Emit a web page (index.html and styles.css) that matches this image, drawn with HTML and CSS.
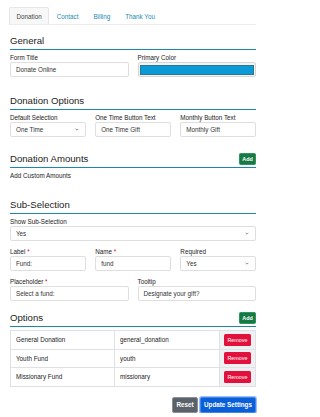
FILE: index.html
```html
<!DOCTYPE html>
<html>
<head>
<meta charset="utf-8">
<link rel="stylesheet" href="styles.css">
</head>
<body>
<div class="page">
  <ul class="tabs">
    <li class="tab active">Donation</li>
    <li class="tab">Contact</li>
    <li class="tab">Billing</li>
    <li class="tab">Thank You</li>
  </ul>

  <section class="sec sec-general">
    <div class="sec-head"><h2>General</h2></div>
    <div class="row cols-2">
      <div class="field">
        <label>Form Title</label>
        <div class="input">Donate Online</div>
      </div>
      <div class="field">
        <label>Primary Color</label>
        <div class="input color"><span class="swatch"></span></div>
      </div>
    </div>
  </section>

  <section class="sec sec-options">
    <div class="sec-head"><h2>Donation Options</h2></div>
    <div class="row cols-3">
      <div class="field">
        <label>Default Selection</label>
        <div class="input select">One Time<svg class="chev" viewBox="0 0 6 4"><polyline points="1,1 3,3 5,1"/></svg></div>
      </div>
      <div class="field">
        <label>One Time Button Text</label>
        <div class="input">One Time Gift</div>
      </div>
      <div class="field">
        <label>Monthly Button Text</label>
        <div class="input">Monthly Gift</div>
      </div>
    </div>
  </section>

  <section class="sec sec-amounts">
    <div class="sec-head"><h2>Donation Amounts</h2><button class="btn-add">Add</button></div>
    <p class="note">Add Custom Amounts</p>
  </section>

  <section class="sec sec-sub">
    <div class="sec-head"><h2>Sub-Selection</h2></div>
    <div class="row">
      <div class="field">
        <label>Show Sub-Selection</label>
        <div class="input select">Yes<svg class="chev" viewBox="0 0 6 4"><polyline points="1,1 3,3 5,1"/></svg></div>
      </div>
    </div>
    <div class="row cols-3 gap-row">
      <div class="field">
        <label>Label <span class="req">*</span></label>
        <div class="input">Fund:</div>
      </div>
      <div class="field">
        <label>Name <span class="req">*</span></label>
        <div class="input">fund</div>
      </div>
      <div class="field">
        <label>Required</label>
        <div class="input select">Yes<svg class="chev" viewBox="0 0 6 4"><polyline points="1,1 3,3 5,1"/></svg></div>
      </div>
    </div>
    <div class="row cols-2 gap-row">
      <div class="field">
        <label>Placeholder <span class="req">*</span></label>
        <div class="input">Select a fund:</div>
      </div>
      <div class="field">
        <label>Tooltip</label>
        <div class="input">Designate your gift?</div>
      </div>
    </div>
  </section>

  <section class="sec sec-opts">
    <div class="sec-head"><h2>Options</h2><button class="btn-add">Add</button></div>
    <table class="opt-table">
      <tr><td>General Donation</td><td>general_donation</td><td class="act"><button class="btn-remove">Remove</button></td></tr>
      <tr><td>Youth Fund</td><td>youth</td><td class="act"><button class="btn-remove">Remove</button></td></tr>
      <tr><td>Missionary Fund</td><td>missionary</td><td class="act"><button class="btn-remove">Remove</button></td></tr>
    </table>
  </section>

  <div class="actions">
    <button class="btn-reset">Reset</button>
    <button class="btn-update">Update Settings</button>
  </div>
</div>
</body>
</html>
```

FILE: styles.css
```css
* { box-sizing: border-box; }
html, body { margin: 0; padding: 0; background: #fff; }
body {
  font-family: "Liberation Sans", Arial, Helvetica, sans-serif;
  font-size: 6.3px;
  color: #222;
}
.page { width: 264px; padding: 0 8px 0 10px; }

.tabs {
  list-style: none;
  margin: 7px 0 0 -1px;
  padding: 0;
  display: flex;
  border-bottom: 1px solid #ececec;
  height: 18px;
}
.tab {
  height: 17px;
  line-height: 17px;
  padding: 0 6.5px;
  color: #1a8ab5;
  border: 1px solid transparent;
  border-bottom: none;
}
.tab.active {
  color: #444;
  background: #f7f7f7;
  border-color: #e6e6e6;
  border-radius: 2px 2px 0 0;
}

.sec-head {
  display: flex;
  justify-content: space-between;
  align-items: center;
  padding-bottom: 2px;
  border-bottom: 1.5px solid #1b86b2;
}
.sec-head h2 {
  margin: 0;
  font-size: 9.6px;
  line-height: 12px;
  font-weight: normal;
  color: #222;
}
.sec-general { margin-top: 10px; }
.sec-options { margin-top: 17.5px; }
.sec-amounts { margin-top: 16.5px; }
.sec-sub { margin-top: 19px; }
.sec-opts { margin-top: 10.5px; }

.row { margin-top: 3px; display: grid; grid-template-columns: 1fr; }
.row.gap-row { margin-top: 6px; }
.cols-2 { grid-template-columns: 1fr 1fr; column-gap: 9px; }
.cols-3 { grid-template-columns: 1fr 1fr 1fr; column-gap: 9.5px; }

.field label {
  display: block;
  line-height: 9px;
  color: #222;
}
.req { color: #d0102e; }
.input {
  height: 15px;
  line-height: 13px;
  border: 1px solid #dedede;
  border-radius: 2px;
  padding: 0 5px;
  color: #333;
  background: #fff;
  display: flex;
  align-items: center;
  justify-content: space-between;
}
.input.color { padding: 1.5px; background: #f3f3f3; border-color: #d6d6d6; }
.swatch {
  display: block;
  width: 100%;
  height: 100%;
  background: #0a9bd6;
  border: 1px solid #2f7696;
}
.chev { width: 4px; height: 3px; fill: none; stroke: #555; stroke-width: 1; margin-right: 1px; }

.note { margin: 3px 0 0; line-height: 9px; color: #222; }

.btn-add {
  font-family: inherit;
  font-size: 5.4px;
  font-weight: bold;
  color: #fff;
  background: #177a45;
  border: 1px solid #2b9660;
  border-radius: 1.5px;
  width: 17px;
  height: 12px;
  padding: 0;
}

.opt-table {
  width: 100%;
  margin-top: 3.5px;
  border-collapse: collapse;
  table-layout: fixed;
}
.opt-table td {
  border: 1px solid #dfe2e5;
  height: 18.5px;
  padding: 0 5px;
  color: #222;
}
.opt-table td:nth-child(1) { width: 104px; }
.opt-table td:nth-child(2) { width: 105px; }
.opt-table td.act { background: #eef0f2; padding: 0 4px; text-align: center; }
.btn-remove {
  font-family: inherit;
  font-size: 5.4px;
  color: #fff;
  background: #e2103c;
  border: none;
  border-radius: 1.5px;
  width: 27px;
  height: 12px;
  padding: 0;
  display: block;
}

.actions {
  display: flex;
  justify-content: flex-end;
  gap: 2px;
  margin-top: 10px;
}
.btn-reset, .btn-update {
  font-family: inherit;
  font-size: 6.3px;
  font-weight: bold;
  color: #fff;
  height: 16px;
  padding: 0;
  border-radius: 2px;
}
.btn-reset {
  width: 26px;
  background: #5b6269;
  border: 1px solid #8a9096;
}
.btn-update {
  width: 56px;
  background: #0a5fd8;
  border: 1px solid #3f86ee;
  box-shadow: 0 0 0 1px #9cc0f5;
}
```
